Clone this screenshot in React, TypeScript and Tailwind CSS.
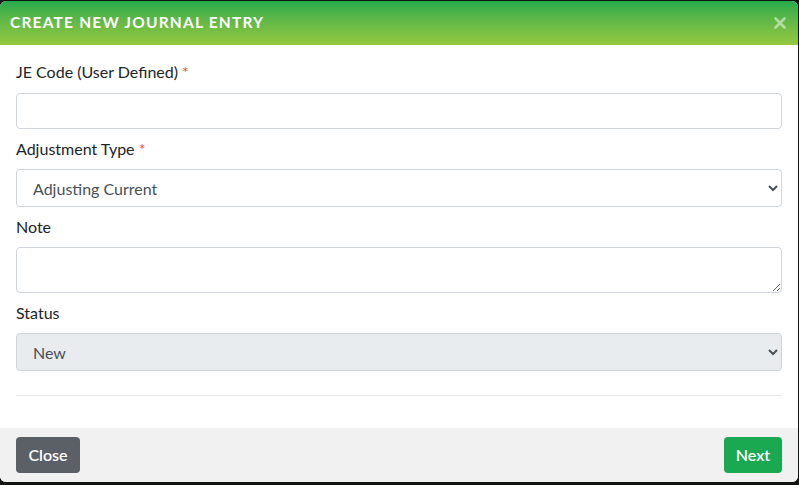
import React, { useState } from 'react';

const fieldBase =
  'w-full border border-[#ced4da] rounded-[4px] text-[16px] text-[#495057] outline-none';

const labelCls = 'text-[16px] leading-[22px] text-[#212529]';

export default function App() {
  const [code, setCode] = useState('');
  const [adjType, setAdjType] = useState('Adjusting Current');
  const [note, setNote] = useState('');

  return (
    <div
      className="w-[799px] h-[485px] bg-[#121410] pt-px overflow-hidden"
      style={{ fontFamily: 'Lato, "Open Sans", sans-serif' }}
    >
      <div className="w-[798px] h-[481px] rounded-[6px] overflow-hidden bg-white flex flex-col">
        {/* header */}
        <div className="h-[44px] shrink-0 bg-gradient-to-b from-[#20aa4b] to-[#94c93e] flex items-center justify-between pl-[10px] pr-[12px]">
          <h2 className="text-white font-bold text-[15.5px] tracking-[1.2px] uppercase">
            Create New Journal Entry
          </h2>
          <button className="text-white/50 leading-none">
            <svg width="12" height="12" viewBox="0 0 12 12">
              <path d="M1.5 1.5 L10.5 10.5 M10.5 1.5 L1.5 10.5" stroke="currentColor" strokeWidth="2.6" strokeLinecap="round" />
            </svg>
          </button>
        </div>

        {/* body */}
        <div className="flex-1 px-4 pt-4 flex flex-col">
          <label className={`${labelCls} mb-[10px]`}>
            JE Code (User Defined) <span className="text-[#e8553e]">*</span>
          </label>
          <input
            value={code}
            onChange={(e) => setCode(e.target.value)}
            className={`${fieldBase} bg-white h-[36px] px-4`}
          />

          <label className={`${labelCls} mt-[9px] mb-[9px]`}>
            Adjustment Type <span className="text-[#e8553e]">*</span>
          </label>
          <select
            value={adjType}
            onChange={(e) => setAdjType(e.target.value)}
            className={`${fieldBase} bg-white h-[38px] pl-3 pr-2`}
          >
            <option>Adjusting Current</option>
            <option>Adjusting Prior</option>
            <option>Reclassification</option>
          </select>

          <label className={`${labelCls} mt-[9px] mb-[9px]`}>Note</label>
          <textarea
            value={note}
            onChange={(e) => setNote(e.target.value)}
            className={`${fieldBase} bg-white h-[46px] px-4 py-1 block`}
          />

          <label className={`${labelCls} mt-[9px] mb-[9px]`}>Status</label>
          <select
            disabled
            defaultValue="New"
            className={`${fieldBase} bg-[#e9ecef] h-[38px] pl-3 pr-2 disabled:text-[#495057] disabled:opacity-100`}
          >
            <option>New</option>
          </select>

          <hr className="mt-6 border-0 border-t border-[#e5e5e5]" />
        </div>

        {/* footer */}
        <div className="h-[54px] shrink-0 bg-[#f1f1f1] flex items-center justify-between pl-4 pr-4">
          <button className="h-[36px] w-[64px] rounded-[4px] bg-[#5a6066] text-white text-[16px] font-semibold">
            Close
          </button>
          <button className="h-[36px] w-[58px] rounded-[4px] bg-[#1aa851] text-white text-[16px] font-semibold">
            Next
          </button>
        </div>
      </div>
    </div>
  );
}
